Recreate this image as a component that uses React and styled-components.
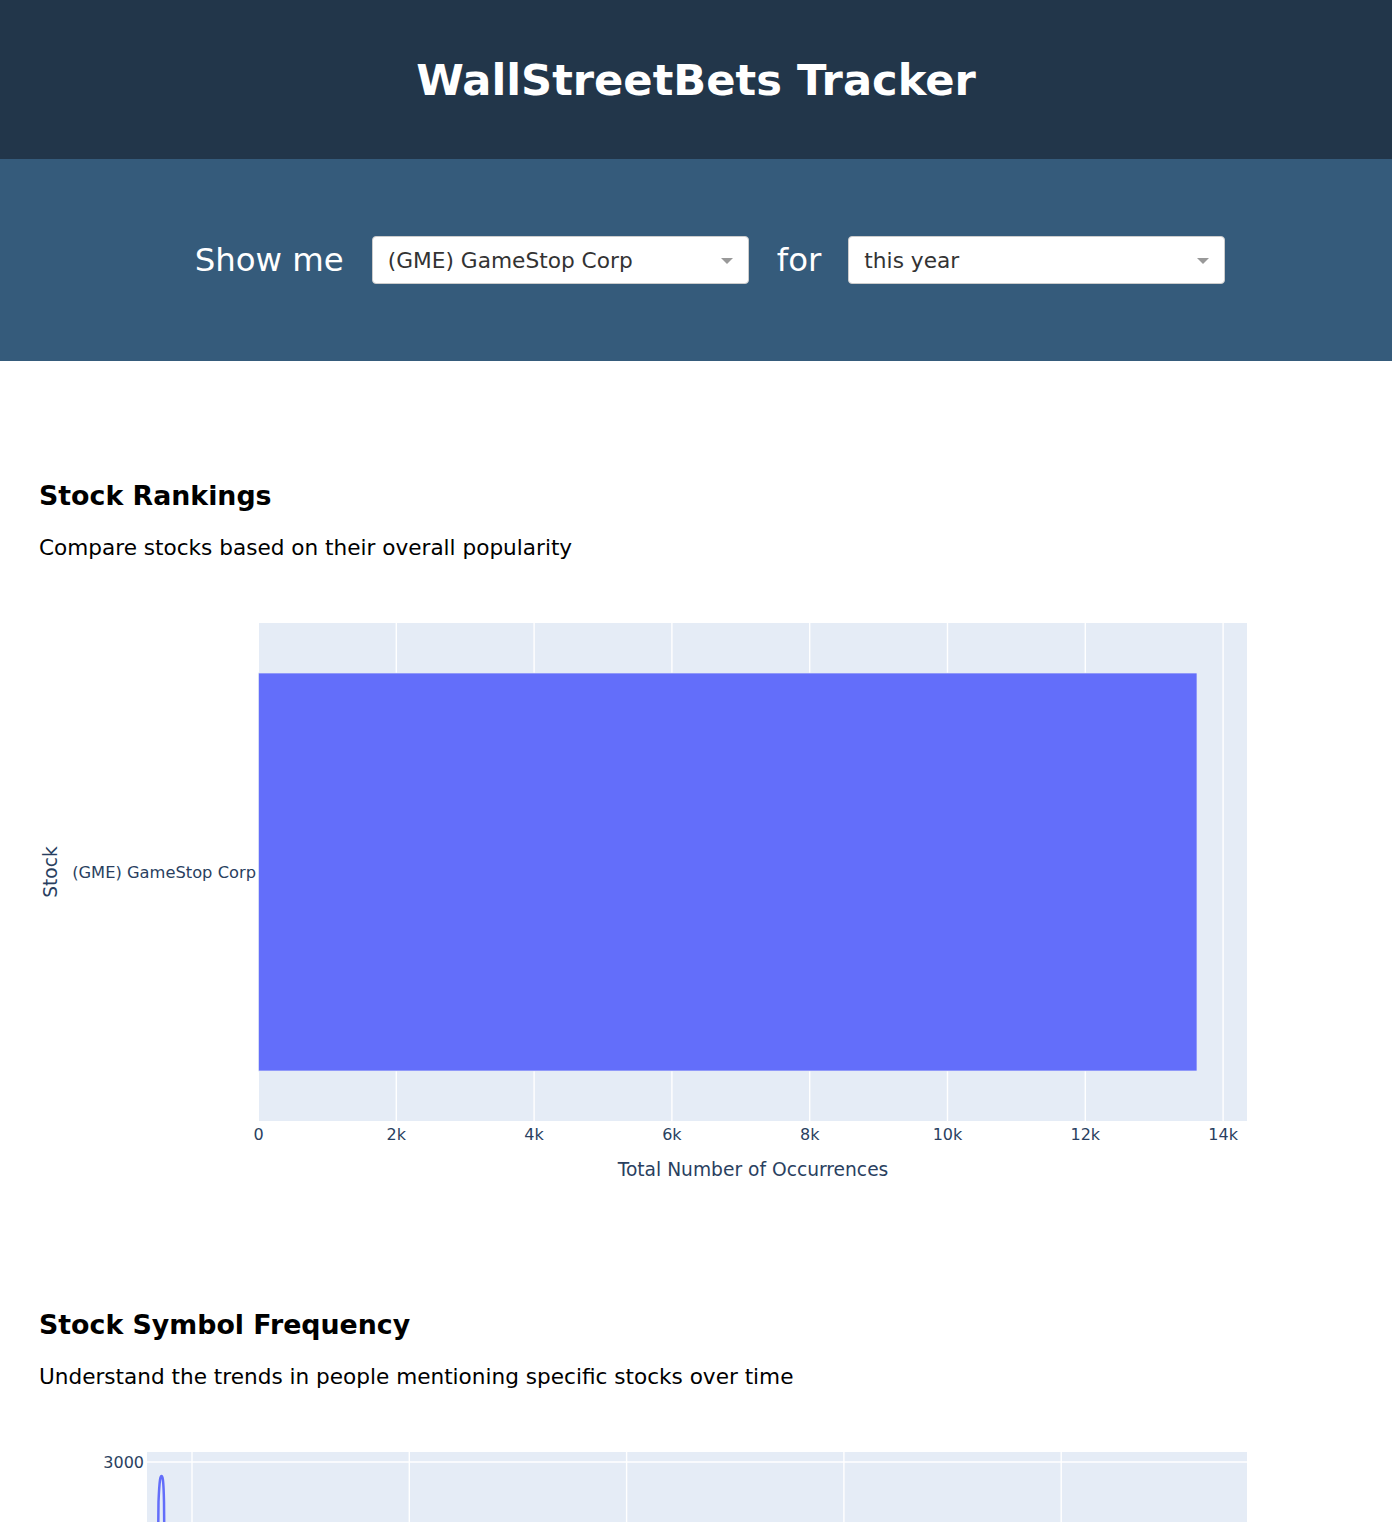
import React from "react";
import styled, { createGlobalStyle } from "styled-components";

const GlobalStyle = createGlobalStyle`
  html, body { margin: 0; padding: 0; background: #ffffff; }
  body { font-family: "DejaVu Sans", Verdana, sans-serif; color: #000; }
`;

const Header = styled.header`
  height: 159px;
  background: #22364a;
  display: flex;
  align-items: center;
  justify-content: center;
`;

const Title = styled.h1`
  margin: 0;
  color: #ffffff;
  font-size: 43.2px;
  font-weight: bold;
  line-height: 1;
  transform: translateY(1px);
`;

const ControlBar = styled.div`
  height: 202px;
  background: #355b7b;
  display: flex;
  align-items: center;
  justify-content: center;
  padding-left: 28px;
  box-sizing: border-box;
`;

const Label = styled.span`
  color: #ffffff;
  font-size: 32.4px;
  line-height: 1;
  margin: ${(p) => p.$margin || "0"};
`;

const Select = styled.div`
  width: 377px;
  height: 48px;
  box-sizing: border-box;
  background: #ffffff;
  border: 1px solid #cccccc;
  border-radius: 4px;
  display: flex;
  align-items: center;
  justify-content: space-between;
  padding: 1px 15px 0 15px;
  font-size: 21.7px;
  color: #333333;
`;

const Caret = styled.span`
  width: 0;
  height: 0;
  border-left: 6px solid transparent;
  border-right: 6px solid transparent;
  border-top: 6px solid #999999;
  margin-top: 0;
`;

const Main = styled.main`
  padding: 119px 39px 0 39px;
`;

const Section = styled.section`
  & + & {
    margin-top: 119px;
  }
`;

const Heading = styled.h2`
  margin: 0;
  font-size: 26.8px;
  font-weight: bold;
  line-height: 31px;
`;

const SubText = styled.p`
  margin: 25px 0 0 0;
  font-size: 21.6px;
  line-height: 24px;
`;

const ChartSvg = styled.svg`
  display: block;
  margin-top: 23px;
  font-family: "DejaVu Sans", Verdana, sans-serif;
`;

const PLOT_BG = "#E5ECF6";
const AXIS = "#2a3f5f";
const BAR = "#636EFA";

function RankingChart() {
  const x0 = 219.5;
  const step = 137.8;
  const ticks = [0, 2, 4, 6, 8, 10, 12, 14];
  return (
    <ChartSvg width="1314" height="607" viewBox="0 0 1314 607">
      <rect x="220" y="40" width="988" height="498" fill={PLOT_BG} />
      {ticks.slice(1).map((t) => (
        <line
          key={t}
          x1={x0 + (t / 2) * step}
          x2={x0 + (t / 2) * step}
          y1="40"
          y2="538"
          stroke="#ffffff"
          strokeWidth="1.4"
        />
      ))}
      <rect
        x="219.5"
        y="90"
        width="938.5"
        height="398"
        fill={BAR}
        stroke={PLOT_BG}
        strokeWidth="0.7"
      />
      {ticks.map((t) => (
        <text
          key={t}
          x={x0 + (t / 2) * step}
          y="556.5"
          fontSize="16"
          fill={AXIS}
          textAnchor="middle"
        >
          {t === 0 ? "0" : `${t}k`}
        </text>
      ))}
      <text x="714" y="592.5" fontSize="18.67" fill={AXIS} textAnchor="middle">
        Total Number of Occurrences
      </text>
      <text
        x="17.5"
        y="289"
        fontSize="18.67"
        fill={AXIS}
        textAnchor="middle"
        transform="rotate(-90 17.5 289)"
      >
        Stock
      </text>
      <text x="217" y="294.5" fontSize="16.3" fill={AXIS} textAnchor="end">
        (GME) GameStop Corp
      </text>
    </ChartSvg>
  );
}

function FrequencyChart() {
  const vlines = [153, 370.3, 587.6, 804.9, 1022.2];
  const hlines = [50, 170, 290, 410];
  return (
    <ChartSvg width="1314" height="640" viewBox="0 0 1314 640">
      <rect x="108" y="40" width="1100" height="500" fill={PLOT_BG} />
      {vlines.map((x) => (
        <line key={x} x1={x} x2={x} y1="40" y2="540" stroke="#ffffff" strokeWidth="1.4" />
      ))}
      {hlines.map((y) => (
        <line key={y} x1="108" x2="1208" y1={y} y2={y} stroke="#ffffff" strokeWidth="1.4" />
      ))}
      <text x="105" y="55.5" fontSize="16" fill={AXIS} textAnchor="end">
        3000
      </text>
      <path
        d="M 116.5 410 C 117.5 300, 118.5 120, 119.5 90 C 120.5 66, 121.5 64, 122.5 64 C 123.5 64, 124.5 66, 125 90 C 125.5 120, 126.5 300, 128 405 L 135 400 L 145 395"
        fill="none"
        stroke={BAR}
        strokeWidth="2.5"
        strokeLinejoin="round"
      />
    </ChartSvg>
  );
}

export default function App() {
  return (
    <>
      <GlobalStyle />
      <Header>
        <Title>WallStreetBets Tracker</Title>
      </Header>
      <ControlBar>
        <Label $margin="0 28px 0 0">Show me</Label>
        <Select>
          <span>(GME) GameStop Corp</span>
          <Caret />
        </Select>
        <Label $margin="0 27px 0 28px">for</Label>
        <Select>
          <span>this year</span>
          <Caret />
        </Select>
      </ControlBar>
      <Main>
        <Section>
          <Heading>Stock Rankings</Heading>
          <SubText>Compare stocks based on their overall popularity</SubText>
          <RankingChart />
        </Section>
        <Section>
          <Heading>Stock Symbol Frequency</Heading>
          <SubText>Understand the trends in people mentioning specific stocks over time</SubText>
          <FrequencyChart />
        </Section>
      </Main>
    </>
  );
}
